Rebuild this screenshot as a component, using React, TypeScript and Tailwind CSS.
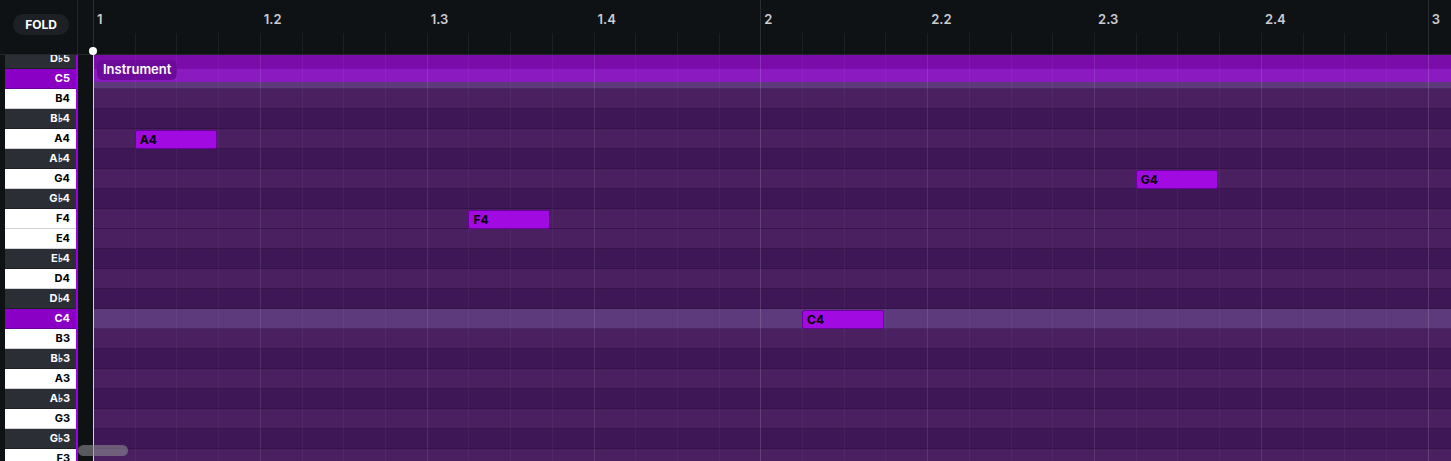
import React from "react";

// one sixteenth of a beat in px, bar = 16 sixteenths
const SIX = 41.71;
const ROW = 20;

type Key = { name: string; black?: boolean; active?: boolean };

const keys: Key[] = [
  { name: "D♭5", black: true },
  { name: "C5", active: true },
  { name: "B4" },
  { name: "B♭4", black: true },
  { name: "A4" },
  { name: "A♭4", black: true },
  { name: "G4" },
  { name: "G♭4", black: true },
  { name: "F4" },
  { name: "E4" },
  { name: "E♭4", black: true },
  { name: "D4" },
  { name: "D♭4", black: true },
  { name: "C4", active: true },
  { name: "B3" },
  { name: "B♭3", black: true },
  { name: "A3" },
  { name: "A♭3", black: true },
  { name: "G3" },
  { name: "G♭3", black: true },
  { name: "F3" },
];

const labels = ["1", "1.2", "1.3", "1.4", "2", "2.2", "2.3", "2.4", "3"];

const notes = [
  { name: "A4", row: 4, start: 1 },
  { name: "F4", row: 8, start: 9 },
  { name: "C4", row: 13, start: 17 },
  { name: "G4", row: 6, start: 25 },
];

const ticks = Array.from({ length: 33 }, (_, i) => i);

const Ruler = () => (
  <div className="flex h-[55px] shrink-0 border-b border-[#23272b]">
    <div className="w-[78px] shrink-0 border-r border-[#24282c] pl-[13px] pt-[14px]">
      <div className="flex h-[21px] w-[56px] items-center justify-center rounded-full bg-[#1d2125] text-[12px] font-bold text-white">
        FOLD
      </div>
    </div>
    <div className="w-[15px] shrink-0" />
    <div className="relative flex-1">
      {ticks.map((k) =>
        k % 16 === 0 ? (
          <div
            key={k}
            className="absolute top-0 bottom-0 w-px bg-[#2a2e33]"
            style={{ left: k * SIX }}
          />
        ) : (
          <div
            key={k}
            className="absolute top-[33px] bottom-0 w-px bg-[#1c2024]"
            style={{ left: k * SIX }}
          />
        )
      )}
      {labels.map((l, i) => (
        <span
          key={l}
          className="absolute top-[10px] text-[13px] font-semibold text-[#c9cdd2]"
          style={{ left: i * SIX * 4 + 4 }}
        >
          {l}
        </span>
      ))}
      <div className="absolute left-[-4px] top-[47px] z-10 h-[8px] w-[8px] rounded-full bg-white" />
    </div>
  </div>
);

const Keyboard = () => (
  <div className="w-[78px] shrink-0 overflow-hidden border-r-2 border-[#9d00e6] pl-[5px]">
    <div className="-mt-[6px] flex flex-col">
      {keys.map((k) => (
        <div
          key={k.name}
          className={
            k.active
              ? "flex h-[20px] items-center justify-end border-b border-[#6a0096] bg-[#8a00c4] pr-[6px] text-[11px] font-bold text-white"
              : k.black
              ? "flex h-[20px] items-center justify-end border-b border-[#1c1f23] bg-[#2b2e34] pr-[6px] text-[11px] font-bold text-white"
              : "flex h-[20px] items-center justify-end border-b border-[#d2d2d2] bg-white pr-[6px] text-[11px] font-bold text-black"
          }
        >
          {k.name}
        </div>
      ))}
    </div>
  </div>
);

const Grid = () => (
  <div className="relative flex-1 overflow-hidden">
    <div className="-mt-[6px] flex flex-col">
      {keys.map((k) => (
        <div
          key={k.name}
          className={
            k.active
              ? "h-[20px] border-b border-[#4a2866] bg-[#5d3a7b]"
              : k.black
              ? "h-[20px] border-b border-[#331148] bg-[#3e1756]"
              : "h-[20px] border-b border-[#361449] bg-[#4a2061]"
          }
        />
      ))}
    </div>

    {/* clip header */}
    <div className="absolute top-0 left-0 right-0">
      <div className="h-[14px] bg-[#7a0ca9]" />
      <div className="h-[13px] bg-[#8b1bc1]" />
    </div>
    <div className="absolute left-[4px] top-[5px] flex h-[20px] items-center rounded-[6px] bg-[#6c0a99] px-[6px] text-[13px] font-semibold text-white">
      Instrument
    </div>

    {ticks.map((k) =>
      k === 0 ? null : (
        <div
          key={k}
          className={
            k % 16 === 0
              ? "absolute top-0 bottom-0 w-px bg-white/15"
              : k % 4 === 0
              ? "absolute top-0 bottom-0 w-px bg-white/10"
              : "absolute top-0 bottom-0 w-px bg-white/[0.04]"
          }
          style={{ left: k * SIX }}
        />
      )
    )}

    {notes.map((n) => (
      <div
        key={n.name}
        className="absolute flex h-[19px] w-[82px] items-center rounded-[2px] border border-[#6c009c] bg-[#a10ae0] pl-[4px] text-[12px] font-bold text-black"
        style={{ left: n.start * SIX, top: n.row * ROW - 6 + 1 }}
      >
        {n.name}
      </div>
    ))}

    <div className="absolute top-0 bottom-0 left-0 w-px bg-[#d2d2d8]" />
  </div>
);

export default function App() {
  return (
    <div
      className="flex h-[461px] w-[1451px] flex-col overflow-hidden bg-[#0f1215]"
      style={{ fontFamily: "Inter, 'Noto Sans', sans-serif" }}
    >
      <Ruler />
      <div className="relative flex flex-1 overflow-hidden">
        <Keyboard />
        <div className="w-[15px] shrink-0 bg-[#0f1215]" />
        <Grid />
        <div className="absolute bottom-[5px] left-[78px] h-[11px] w-[50px] rounded-full bg-[#8a8a90]/60" />
      </div>
    </div>
  );
}
